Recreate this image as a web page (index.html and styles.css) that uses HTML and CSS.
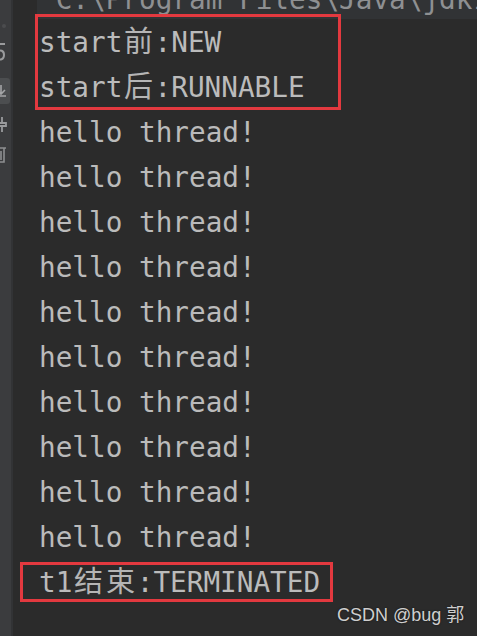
FILE: index.html
```html
<!DOCTYPE html>
<html lang="zh">
<head>
<meta charset="utf-8">
<title>Console</title>
<link rel="stylesheet" href="styles.css">
</head>
<body>
<div class="window">
  <aside class="gutter">
    <span class="g-icon g-dot"></span>
    <svg class="g-svg g-five" width="10" height="20" viewBox="0 0 10 20"><path d="M8 2H1v7c2-1 6-1 6 4s-4 5-7 4" fill="none" stroke="#9a9b9d" stroke-width="2"/></svg>
    <div class="g-active">
      <svg class="g-svg" width="10" height="14" viewBox="0 0 10 14"><path d="M4 1v8M0 6l4 4 4-4M0 12h9" fill="none" stroke="#a4a5a7" stroke-width="1.6"/></svg>
    </div>
    <svg class="g-svg g-pin" width="10" height="16" viewBox="0 0 10 16"><path d="M4 0v5M0 6h8v3H0zM4 9v6" fill="none" stroke="#9a9b9d" stroke-width="1.8"/></svg>
    <svg class="g-svg g-bin" width="10" height="18" viewBox="0 0 10 18"><path d="M0 2h9M2 2v14h5V2M4 5v9" fill="none" stroke="#8e8f91" stroke-width="1.6"/></svg>
  </aside>
  <main class="console">
    <div class="cmd-band"><div class="cmd-line">"C:\Program Files\Java\jdk1.8</div></div>
    <div class="output">
      <div class="row">start<span class="cjk">前</span>:NEW</div>
      <div class="row">start<span class="cjk">后</span>:RUNNABLE</div>
      <div class="row">hello thread!</div>
      <div class="row">hello thread!</div>
      <div class="row">hello thread!</div>
      <div class="row">hello thread!</div>
      <div class="row">hello thread!</div>
      <div class="row">hello thread!</div>
      <div class="row">hello thread!</div>
      <div class="row">hello thread!</div>
      <div class="row">hello thread!</div>
      <div class="row">hello thread!</div>
      <div class="row">t1<span class="cjk">结</span><span class="cjk">束</span>:TERMINATED</div>
    </div>
    <div class="mark mark-top"></div>
    <div class="mark mark-bottom"></div>
    <div class="watermark">CSDN @bug 郭</div>
  </main>
</div>
</body>
</html>
```
FILE: styles.css
```css
html, body {
  margin: 0;
  padding: 0;
  background: #2b2b2b;
}

.window {
  display: flex;
  width: 477px;
  height: 636px;
  overflow: hidden;
  background: #2b2b2b;
}

.gutter {
  flex: 0 0 11px;
  background: #3b3c3e;
  border-right: 2px solid #323335;
  display: flex;
  flex-direction: column;
  align-items: flex-start;
  overflow: hidden;
}

.g-icon.g-dot {
  display: block;
  width: 4px;
  height: 4px;
  margin: 24px 0 0 2px;
  background: #4b4c4e;
  border-radius: 2px;
}

.g-svg {
  display: block;
  flex: 0 0 auto;
}

.g-five {
  margin: 14px 0 0 -3px;
}

.g-active {
  margin-top: 16px;
  width: 10px;
  height: 26px;
  background: #4c4e50;
  border-radius: 0 3px 3px 0;
  display: flex;
  align-items: center;
}

.g-active .g-svg {
  margin-left: -3px;
}

.g-pin {
  margin: 13px 0 0 -2px;
}

.g-bin {
  margin: 13px 0 0 -3px;
}

.console {
  position: relative;
  flex: 1;
  font-family: "DejaVu Sans Mono", "Noto Sans CJK SC", monospace;
  font-size: 27.7px;
  color: #bbbbbb;
}

.cmd-band {
  margin-left: 24px;
  height: 19px;
  overflow: hidden;
  background: #313335;
}

.cmd-line {
  margin-top: -23px;
  padding-left: 2px;
  height: 45px;
  line-height: 45px;
  white-space: pre;
  color: #8e9092;
}

.output {
  margin-top: 1px;
  padding-left: 26px;
}

.row {
  height: 45px;
  line-height: 45px;
  white-space: pre;
}

.cjk {
  display: inline-block;
  width: 2ch;
  line-height: 1;
  text-align: center;
  font-family: "Noto Sans CJK SC", sans-serif;
  font-size: 29px;
  color: #b5b5b5;
}

.mark {
  position: absolute;
  box-sizing: border-box;
  border: 3px solid #e3393f;
}

.mark-top {
  left: 22px;
  top: 14px;
  width: 306px;
  height: 96px;
}

.mark-bottom {
  left: 7px;
  top: 562px;
  width: 313px;
  height: 40px;
}

.watermark {
  position: absolute;
  left: 324px;
  top: 604px;
  font-family: "Liberation Sans", "Noto Sans CJK SC", sans-serif;
  font-size: 18px;
  line-height: 22px;
  color: #cfcfcf;
  text-shadow: 0 0 2px rgba(0, 0, 0, 0.6);
  white-space: nowrap;
}
```
